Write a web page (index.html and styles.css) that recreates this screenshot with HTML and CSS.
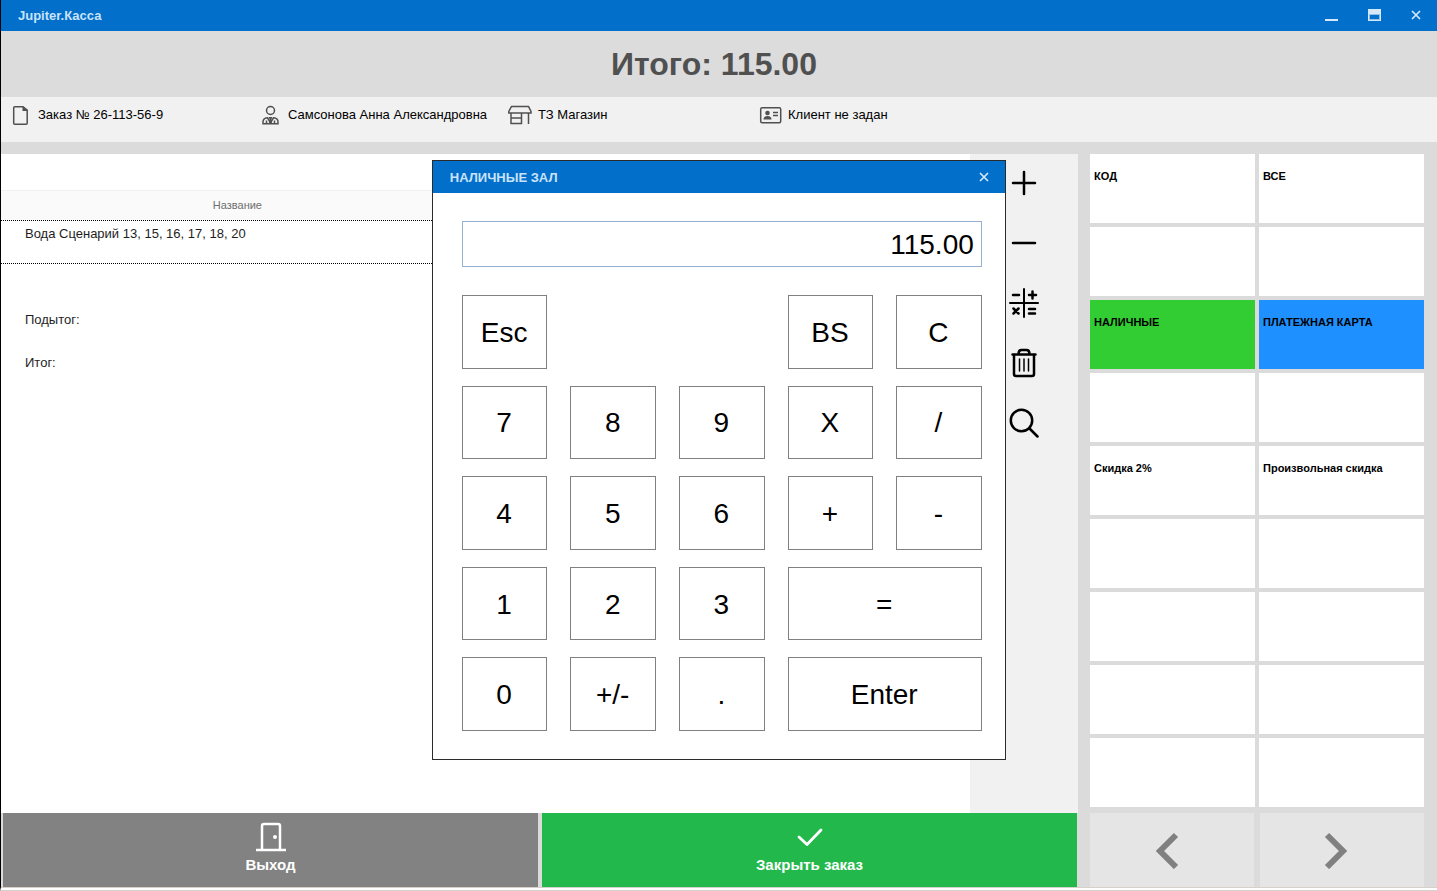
FILE: index.html
```html
<!DOCTYPE html>
<html lang="ru">
<head>
    <meta charset="UTF-8">
    <title>Jupiter.Касса</title>
    <link rel="stylesheet" href="styles.css">
</head>
<body>
    <header class="titlebar">
        <span class="titlebar-name">Jupiter.Касса</span>
        <div class="window-buttons">
            <button type="button" aria-label="Свернуть">
                <svg width="13" height="12" viewBox="0 0 13 12"><path d="M0 11h13" stroke="#d6e8fa" stroke-width="2"/></svg>
            </button>
            <button type="button" aria-label="Развернуть">
                <svg width="13" height="12" viewBox="0 0 13 12"><path d="M0 0h13v12H0z" fill="#d6e8fa"/><path d="M1.5 5.500h10v5h-10z" fill="#026fcb" stroke="#8fc0ec"/></svg>
            </button>
            <button type="button" aria-label="Закрыть">
                <svg width="10" height="10" viewBox="0 0 10 10"><path d="M1 1l8 8M9 1L1 9" stroke="#d6e8fa" stroke-width="1.700"/></svg>
            </button>
        </div>
    </header>

    <h1 class="total">Итого: 115.00</h1>

    <div class="info">
        <div class="info-item">
            <svg width="24" height="24" viewBox="0 0 24 24" fill="none" stroke="#505050" stroke-width="1.500"><path d="M15 3.700H6.700q-1 0-1 1v15.500q0 1 1 1h11.500q1 0 1-1V7z"/><path d="M14.500 3v5H20z" fill="#505050" stroke="none"/></svg>
            <span>Заказ № 26-113-56-9</span>
        </div>
        <div class="info-item">
            <svg width="24" height="24" viewBox="0 0 24 24" fill="none" stroke="#505050" stroke-width="1.500"><circle cx="12.500" cy="7.500" r="4"/><path d="M5 20.800v-2q0-3.500 4.500-4l3 5 3-5q4.500 .5 4.500 4v2zM8.500 20v-2.500M16.500 20v-2.500"/><path d="M10.500 14h4l-1 2 .5 4h-3l.5-4z" fill="#505050" stroke="none"/></svg>
            <span>Самсонова Анна Александровна</span>
        </div>
        <div class="info-item">
            <svg width="24" height="24" viewBox="0 0 24 24" fill="none" stroke="#505050" stroke-width="1.500"><path d="M3.500 3.500h17l2.500 5v1.500H.8V8.500zM3 10v10.500h10.500V10M3 15h10.500M20.500 10v11"/></svg>
            <span>ТЗ Магазин</span>
        </div>
        <div class="info-item">
            <svg width="24" height="24" viewBox="0 0 24 24"><rect x="2.700" y="4.700" width="20" height="15" rx="1.500" fill="none" stroke="#505050" stroke-width="1.500"/><circle cx="9.500" cy="10" r="2.300" fill="#505050"/><path d="M5.500 16.500q0-3.500 4-3.500t4 3.500z" fill="#505050"/><path d="M15 9.500h5M15 12.500h5" stroke="#505050" stroke-width="1.500"/></svg>
            <span>Клиент не задан</span>
        </div>
    </div>

    <main class="main">
        <section class="order">
            <div class="order-body">
                <div class="receipt">
                    <table>
                        <thead>
                            <tr><th class="col-name">Название</th><th></th></tr>
                        </thead>
                        <tbody>
                            <tr class="row-item"><td>Вода Сценарий 13, 15, 16, 17, 18, 20</td><td></td></tr>
                            <tr><td></td><td></td></tr>
                            <tr><td>Подытог:</td><td></td></tr>
                            <tr><td>Итог:</td><td></td></tr>
                        </tbody>
                    </table>
                </div>
                <div class="tools">
                    <button type="button" aria-label="Добавить">
                        <svg width="30" height="30" viewBox="0 0 30 30"><path d="M15 4v22M4 15h22"/></svg>
                    </button>
                    <button type="button" aria-label="Убавить">
                        <svg width="30" height="30" viewBox="0 0 30 30"><path d="M4 15h22"/></svg>
                    </button>
                    <button type="button" aria-label="Количество">
                        <svg width="30" height="30" viewBox="0 0 30 30"><path d="M15 1v28M1 15h28" stroke-width="2"/><path d="M4 7h6M20 7h7M23.500 3.500v7M4.500 20.500l5 5M9.500 20.500l-5 5M20 21h6M20 25.500h6" stroke-width="2.500"/></svg>
                    </button>
                    <button type="button" aria-label="Удалить">
                        <svg width="30" height="30" viewBox="0 0 30 30"><path d="M3.500 6.500h23M5 7v19q0 2 2 2h16q2 0 2-2V7M9.500 6q0-4 3-4h5q3 0 3 4"/><path d="M10.500 11v12M15 11v12M19.500 11v12" stroke-width="1.500"/></svg>
                    </button>
                    <button type="button" aria-label="Найти">
                        <svg width="30" height="30" viewBox="0 0 30 30"><circle cx="12.500" cy="12.500" r="10.700"/><path d="M20.500 20.500l8 8"/></svg>
                    </button>
                </div>
            </div>
            <div class="actions">
                <button type="button" class="action action-exit">
                    <svg width="32" height="32" viewBox="0 0 32 32" fill="none" stroke="#fff" stroke-width="2.500"><path d="M7 29V5q0-2 2-2h14q2 0 2 2v24M1 29h30"/><circle cx="20" cy="16" r="2" fill="#fff" stroke="none"/></svg>
                    <span>Выход</span>
                </button>
                <button type="button" class="action action-close">
                    <svg width="32" height="32" viewBox="0 0 32 32" fill="none" stroke="#fff" stroke-width="2.800" stroke-linecap="round" stroke-linejoin="round"><path d="M5 16l8 7.500L27 9"/></svg>
                    <span>Закрыть заказ</span>
                </button>
            </div>
        </section>

        <aside class="side">
            <div class="tiles">
                <button type="button">КОД</button>
                <button type="button">ВСЕ</button>
                <button type="button"></button>
                <button type="button"></button>
                <button type="button" class="tile-cash">НАЛИЧНЫЕ</button>
                <button type="button" class="tile-card">ПЛАТЕЖНАЯ КАРТА</button>
                <button type="button"></button>
                <button type="button"></button>
                <button type="button">Скидка 2%</button>
                <button type="button">Произвольная скидка</button>
                <button type="button"></button>
                <button type="button"></button>
                <button type="button"></button>
                <button type="button"></button>
                <button type="button"></button>
                <button type="button"></button>
                <button type="button"></button>
                <button type="button"></button>
            </div>
            <div class="pager">
                <button type="button" aria-label="Назад">
                    <svg width="36" height="38" viewBox="0 0 36 38"><path d="M26 4L10 20l16 16"/></svg>
                </button>
                <button type="button" aria-label="Вперёд">
                    <svg width="36" height="38" viewBox="0 0 36 38"><path d="M7 4l16 16L7 36"/></svg>
                </button>
            </div>
        </aside>
    </main>

    <div class="dialog" role="dialog" aria-labelledby="dialogTitle">
        <div class="dialog-title">
            <h2 id="dialogTitle">НАЛИЧНЫЕ ЗАЛ</h2>
            <button type="button" aria-label="Закрыть окно">
                <svg width="10" height="10" viewBox="0 0 10 10"><path d="M1 1l8 8M9 1L1 9" stroke="#d6e8fa" stroke-width="1.700"/></svg>
            </button>
        </div>
        <div class="dialog-body">
            <input type="text" class="amount" value="115.00" aria-label="Сумма">
            <div class="keys">
                <button type="button">Esc</button>
                <button type="button" class="key-bs">BS</button>
                <button type="button">C</button>
                <button type="button">7</button>
                <button type="button">8</button>
                <button type="button">9</button>
                <button type="button">X</button>
                <button type="button">/</button>
                <button type="button">4</button>
                <button type="button">5</button>
                <button type="button">6</button>
                <button type="button">+</button>
                <button type="button">-</button>
                <button type="button">1</button>
                <button type="button">2</button>
                <button type="button">3</button>
                <button type="button" class="key-wide">=</button>
                <button type="button">0</button>
                <button type="button">+/-</button>
                <button type="button">.</button>
                <button type="button" class="key-wide">Enter</button>
            </div>
        </div>
    </div>
</body>
</html>
```
FILE: styles.css
```css
* {
    box-sizing: border-box;
}
html {
    background-color: #fff;
}
body {
    margin: 0;
    min-height: 100vh;
    display: flex;
    flex-direction: column;
    position: relative;
    border-left: 1px solid #000;
    border-bottom: 4px double #d5d0c8;
    background-color: #dbdbdb;
    background-clip: padding-box;
    color: #000;
    font-family: "Liberation Sans", Arial, sans-serif;
    font-size: 13px;
}
button {
    margin: 0;
    padding: 0;
    border: none;
    background: none;
    color: inherit;
    font-family: inherit;
    cursor: pointer;
}
svg {
    display: block;
    flex: none;
}

/* заголовок окна */
.titlebar {
    height: 31px;
    display: flex;
    align-items: center;
    justify-content: space-between;
    padding: 0 16px 1px 17px;
    background-color: #026fcb;
    color: #c9e3fa;
}
.titlebar-name {
    font-weight: bold;
}
.window-buttons {
    display: flex;
    align-items: center;
    gap: 30px;
}
.total {
    height: 66px;
    margin: 0;
    padding-right: 10px;
    background-color: #dcdcdc;
    color: #505050;
    font-size: 32px;
    line-height: 66px;
    text-align: center;
}
.info {
    height: 45px;
    display: grid;
    grid-template-columns: repeat(4, 250px);
    padding: 6px 7px;
    background-color: #f1f1f1;
}
.info-item {
    height: 24px;
    display: flex;
    align-items: center;
    gap: 6px;
    white-space: nowrap;
}
.info-item span {
    padding-bottom: 2px;
}

.main {
    flex: 1;
    display: flex;
    gap: 12px;
    padding: 12px 13px 0 0;
}
.order {
    flex: 1;
    display: flex;
    flex-direction: column;
}
.order-body {
    flex: 1;
    display: flex;
}
.receipt {
    flex: 1;
    padding-top: 36px;
    background-color: #fff;
}
.receipt table {
    width: 100%;
    border-collapse: collapse;
    table-layout: fixed;
}
.receipt th {
    height: 30px;
    padding: 0 2px 2px 0;
    border-top: 1px solid #f0f0f0;
    background-color: #fafafa;
    color: #6e6e6e;
    font-size: 11px;
    font-weight: normal;
}
.receipt .col-name {
    width: 49%;
}
.receipt td {
    height: 43px;
    padding: 5px 24px;
    color: #1e1e1e;
    font-size: 13px;
    line-height: 16px;
    vertical-align: top;
}
.row-item td {
    border-top: 1px dotted #000;
    border-bottom: 1px dotted #000;
}
.tools {
    width: 108px;
    display: flex;
    flex-direction: column;
    background-color: #f1f1f1;
}
.tools button {
    height: 60px;
    display: flex;
    align-items: center;
    justify-content: center;
    padding: 0 1px 2px 0;
}
.tools svg {
    fill: none;
    stroke: #000;
    stroke-width: 2.5;
    stroke-linecap: round;
}

.actions {
    height: 74px;
    display: grid;
    grid-template-columns: 1fr 1fr;
    gap: 4px;
    padding: 0 1px 0 2px;
}
.action {
    display: flex;
    flex-direction: column;
    align-items: center;
    justify-content: center;
    gap: 2px;
    padding-bottom: 4px;
    color: #fff;
    font-size: 15px;
    font-weight: bold;
    line-height: 20px;
}
.action-exit {
    background-color: #828282;
}
.action-close {
    background-color: #22b84b;
}

.side {
    width: 334px;
    display: flex;
    flex-direction: column;
    gap: 6px;
}
.tiles {
    flex: 1;
    display: grid;
    grid-template-columns: 1fr 1fr;
    grid-auto-rows: 1fr;
    gap: 4px;
}
.tiles button {
    display: flex;
    padding: 14px 4px;
    background-color: #fff;
    font-size: 11px;
    font-weight: bold;
    line-height: 16px;
}
.tiles .tile-cash {
    background-color: #32cd32;
}
.tiles .tile-card {
    background-color: #1e90ff;
}
.pager {
    height: 74px;
    display: grid;
    grid-template-columns: 1fr 1fr;
    gap: 6px;
}
.pager button {
    display: flex;
    align-items: center;
    justify-content: center;
    padding-right: 8px;
    background-color: #e5e5e5;
}
.pager svg {
    fill: none;
    stroke: #808080;
    stroke-width: 6;
}

/* окно ввода суммы */
.dialog {
    position: absolute;
    top: 160px;
    left: 30%;
    width: 574px;
    border: 1px solid #2b2b2b;
    background-color: #fff;
}
.dialog-title {
    height: 32px;
    display: flex;
    align-items: center;
    justify-content: space-between;
    padding: 0 16px 0 17px;
    background-color: #026fcb;
    color: #c9e3fa;
}
.dialog-title h2 {
    margin: 0;
    font-size: 13px;
}
.dialog-body {
    padding: 28px 23px 28px 29px;
}
.amount {
    display: block;
    width: 100%;
    height: 46px;
    margin-bottom: 28px;
    padding: 2px 7px 0;
    border: 1px solid #96b0d0;
    font-family: inherit;
    font-size: 28px;
    text-align: right;
}
.keys {
    height: 436px;
    display: grid;
    grid-template-columns: repeat(5, 1fr);
    grid-template-rows: repeat(5, 1fr);
    gap: 17px 23px;
}
.keys button {
    padding: 2px 1px 0 0;
    border: 1px solid #808080;
    font-size: 28px;
}
.keys .key-bs {
    grid-column: 4;
}
.keys .key-wide {
    grid-column: span 2;
}
```
